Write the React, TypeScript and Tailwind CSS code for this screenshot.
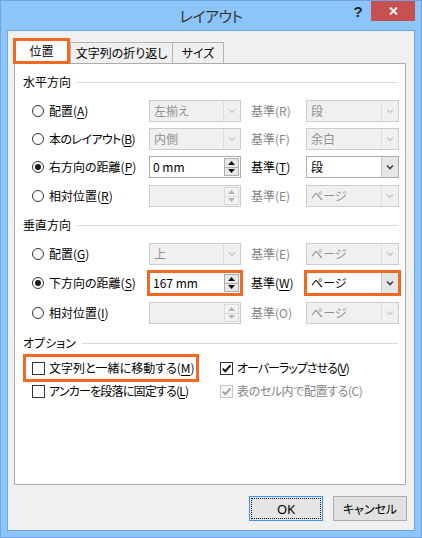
import React from "react";

const ORANGE = "#f26a21";

function U({ children }: { children: React.ReactNode }) {
  return <span className="underline underline-offset-[2px] decoration-1">{children}</span>;
}

function Radio({ checked }: { checked?: boolean }) {
  return (
    <div className="w-[12px] h-[12px] shrink-0 rounded-full border border-[#333333] bg-white flex items-center justify-center">
      {checked && <div className="w-[6px] h-[6px] rounded-full bg-[#1a1a1a]" />}
    </div>
  );
}

function Chevron({ disabled }: { disabled?: boolean }) {
  return (
    <svg width="8" height="6" viewBox="0 0 8 6">
      <polyline
        points="1,1.5 4,4.5 7,1.5"
        fill="none"
        stroke={disabled ? "#c4c4c4" : "#404040"}
        strokeWidth={disabled ? 1.2 : 1.6}
      />
    </svg>
  );
}

function Combo({ text, disabled, hl }: { text: string; disabled?: boolean; hl?: boolean }) {
  return (
    <div
      className={`w-[93px] h-[22px] flex border ${
        disabled ? "border-[#cccccc] bg-[#f0f0f0] text-[#8f8f8f]" : "border-[#abadb3] bg-white text-black"
      } ${hl ? "outline-solid outline-[3px] outline-[#f26a21] outline-offset-[-1px]" : ""}`}
    >
      <div className="flex-1 pl-[4px] flex items-center whitespace-nowrap">{text}</div>
      <div
        className={`w-[17px] flex items-center justify-center border-l ${
          disabled ? "border-[#dedede]" : "border-[#c8c8c8] bg-[#e6e6e6]"
        }`}
      >
        <Chevron disabled={disabled} />
      </div>
    </div>
  );
}

function ComboL({ text }: { text: string }) {
  return (
    <div className="w-[92px] h-[22px] flex border border-[#cccccc] bg-[#f0f0f0] text-[#8f8f8f]">
      <div className="flex-1 pl-[4px] flex items-center whitespace-nowrap">{text}</div>
      <div className="w-[17px] flex items-center justify-center border-l border-[#dedede]">
        <Chevron disabled />
      </div>
    </div>
  );
}

function Tri({ up, disabled }: { up?: boolean; disabled?: boolean }) {
  return (
    <svg width="7" height="4" viewBox="0 0 7 4">
      <polygon points={up ? "0,4 3.5,0 7,4" : "0,0 3.5,4 7,0"} fill={disabled ? "#b4b4b4" : "#111111"} />
    </svg>
  );
}

function Spin({ text, disabled, hl }: { text?: string; disabled?: boolean; hl?: boolean }) {
  return (
    <div
      className={`w-[92px] h-[22px] flex border ${
        disabled ? "border-[#cccccc] bg-[#f0f0f0]" : "border-[#abadb3] bg-white"
      } ${hl ? "outline-solid outline-[3px] outline-[#f26a21] outline-offset-[-1px]" : ""}`}
    >
      <div className="flex-1 pl-[3px] flex items-center whitespace-nowrap text-black">{text}</div>
      <div className="w-[16px] flex flex-col py-[1px] pr-[1px]">
        <div
          className={`flex-1 flex items-center justify-center border ${
            disabled ? "border-[#dadada] bg-[#f3f3f3]" : "border-[#adadad] bg-[#e8e8e8]"
          }`}
        >
          <Tri up disabled={disabled} />
        </div>
        <div
          className={`flex-1 -mt-px flex items-center justify-center border ${
            disabled ? "border-[#dadada] bg-[#f3f3f3]" : "border-[#adadad] bg-[#e8e8e8]"
          }`}
        >
          <Tri disabled={disabled} />
        </div>
      </div>
    </div>
  );
}

function Check({ checked, disabled }: { checked?: boolean; disabled?: boolean }) {
  return (
    <div
      className={`w-[13px] h-[13px] shrink-0 border flex items-center justify-center ${
        disabled ? "border-[#c4c4c4] bg-[#f7f7f7]" : "border-[#333333] bg-white"
      }`}
    >
      {checked && (
        <svg width="11" height="11" viewBox="0 0 11 11">
          <polyline
            points="1.8,5.6 4.3,8.2 9.4,2.4"
            fill="none"
            stroke={disabled ? "#a2a2a2" : "#111111"}
            strokeWidth="2"
          />
        </svg>
      )}
    </div>
  );
}

function Header({ children, className = "" }: { children: React.ReactNode; className?: string }) {
  return (
    <div className={`flex items-center h-[16px] pl-[8px] pr-[7px] ${className}`}>
      <span className="whitespace-nowrap">{children}</span>
      <div className="flex-1 h-px bg-[#dcdcdc] ml-[6px]" />
    </div>
  );
}

function Row({
  className = "",
  labelClass = "",
  checked,
  label,
  field,
  base,
  baseDisabled,
  combo,
}: {
  className?: string;
  labelClass?: string;
  checked?: boolean;
  label: React.ReactNode;
  field: React.ReactNode;
  base: React.ReactNode;
  baseDisabled?: boolean;
  combo: React.ReactNode;
}) {
  return (
    <div className={`flex items-center h-[22px] pl-[17px] ${className}`}>
      <div className="w-[117px] flex items-center gap-[5px]">
        <Radio checked={checked} />
        <span className={`whitespace-nowrap ${labelClass}`}>{label}</span>
      </div>
      {field}
      <span className={`ml-[10px] w-[55px] whitespace-nowrap ${baseDisabled ? "text-[#858585]" : "text-black"}`}>
        {base}
      </span>
      {combo}
    </div>
  );
}

export default function App() {
  return (
    <div className="w-[422px] h-[538px] bg-[#8bc5f9] border border-[#6fa5dc] flex flex-col font-['Noto_Sans_CJK_JP','Noto_Sans',sans-serif] [font-feature-settings:'palt'] text-[12px] leading-[16px] text-black overflow-hidden">
      {/* Title bar */}
      <div className="h-[29px] grid grid-cols-[1fr_auto_1fr]">
        <div />
        <div className="flex items-center text-[15px] text-[#333333] pt-[1px] tracking-[-0.5px]">レイアウト</div>
        <div className="flex justify-end items-start pr-[6px]">
          <div className="w-[26px] h-[20px] flex items-center justify-center text-[15px] font-bold text-[#222222] font-['Liberation_Sans',sans-serif] pt-[1px]">
            ?
          </div>
          <div className="w-[44px] h-[20px] bg-[#c75050] flex items-center justify-center">
            <svg width="9" height="8" viewBox="0 0 9 8">
              <line x1="1" y1="0.5" x2="8" y2="7.5" stroke="white" strokeWidth="1.8" />
              <line x1="8" y1="0.5" x2="1" y2="7.5" stroke="white" strokeWidth="1.8" />
            </svg>
          </div>
        </div>
      </div>

      {/* Client area */}
      <div className="ml-[6px] w-[408px] h-[501px] border border-[#72a6da] bg-[#f0f0f0] flex flex-col">
        {/* Tabs */}
        <div className="mt-[7px] ml-[5px] h-[25px] flex items-end relative z-10">
          <div
            className="w-[57px] h-[26px] -mb-px border-[3px] bg-white flex items-center justify-center"
            style={{ borderColor: ORANGE }}
          >
            位置
          </div>
          <div className="w-[103px] h-[21px] border border-b-0 border-[#b4b4b4] bg-[#f0f0f0] flex items-center justify-center whitespace-nowrap">
            文字列の折り返し
          </div>
          <div className="w-[52px] h-[21px] -ml-px border border-b-0 border-[#b4b4b4] bg-[#f0f0f0] flex items-center justify-center whitespace-nowrap">
            サイズ
          </div>
        </div>

        {/* Panel */}
        <div className="ml-[6px] w-[392px] h-[422px] border border-[#acacac] bg-white flex flex-col">
          <Header className="mt-[10px]">水平方向</Header>
          <Row
            className="mt-[10px]"
            label={<>配置(<U>A</U>)</>}
            field={<ComboL text="左揃え" />}
            base="基準(R)"
            baseDisabled
            combo={<Combo text="段" disabled />}
          />
          <Row
            className="mt-[6px]"
            labelClass="tracking-[-0.6px]"
            label={<>本のレイアウト(<U>B</U>)</>}
            field={<ComboL text="内側" />}
            base="基準(F)"
            baseDisabled
            combo={<Combo text="余白" disabled />}
          />
          <Row
            className="mt-[6px]"
            checked
            label={<>右方向の距離(<U>P</U>)</>}
            field={<Spin text="0 mm" />}
            base={<>基準(<U>T</U>)</>}
            combo={<Combo text="段" />}
          />
          <Row
            className="mt-[7px]"
            label={<>相対位置(<U>R</U>)</>}
            field={<Spin disabled />}
            base="基準(E)"
            baseDisabled
            combo={<Combo text="ページ" disabled />}
          />

          <Header className="mt-[10px]">垂直方向</Header>
          <Row
            className="mt-[10px]"
            label={<>配置(<U>G</U>)</>}
            field={<ComboL text="上" />}
            base="基準(E)"
            baseDisabled
            combo={<Combo text="ページ" disabled />}
          />
          <Row
            className="mt-[7px]"
            checked
            label={<>下方向の距離(<U>S</U>)</>}
            field={<Spin text="167 mm" hl />}
            base={<>基準(<U>W</U>)</>}
            combo={<Combo text="ページ" hl />}
          />
          <Row
            className="mt-[8px]"
            label={<>相対位置(<U>I</U>)</>}
            field={<Spin disabled />}
            base="基準(O)"
            baseDisabled
            combo={<Combo text="ページ" disabled />}
          />

          <Header className="mt-[11px]">オプション</Header>
          <div className="mt-[9px] flex items-center h-[16px] pl-[17px]">
            <div className="w-[188px] relative flex items-center gap-[4px]">
              <Check />
              <span className="whitespace-nowrap">
                文字列と一緒に移動する(<U>M</U>)
              </span>
              <div
                className="absolute left-[-9px] top-[-6px] w-[176px] h-[28px] border-[3px]"
                style={{ borderColor: ORANGE }}
              />
            </div>
            <div className="flex items-center gap-[4px]">
              <Check checked />
              <span className="whitespace-nowrap tracking-[-1px]">
                オーバーラップさせる(<U>V</U>)
              </span>
            </div>
          </div>
          <div className="mt-[7px] flex items-center h-[16px] pl-[17px]">
            <div className="w-[188px] flex items-center gap-[4px]">
              <Check />
              <span className="whitespace-nowrap tracking-[-0.8px]">
                アンカーを段落に固定する(<U>L</U>)
              </span>
            </div>
            <div className="flex items-center gap-[4px]">
              <Check checked disabled />
              <span className="whitespace-nowrap text-[#858585] tracking-[-0.4px]">表のセル内で配置する(C)</span>
            </div>
          </div>
        </div>

        {/* Buttons */}
        <div className="mt-[11px] h-[25px] flex justify-end gap-[10px] pr-[7px]">
          <div className="w-[74px] h-[25px] border border-[#3399ff] bg-[#e5e5e5] p-[1px]">
            <div className="w-full h-full border border-dotted border-[#111111] flex items-center justify-center font-['Noto_Sans',sans-serif] text-[13px]">
              OK
            </div>
          </div>
          <div className="w-[74px] h-[25px] border border-[#adadad] bg-[#e1e1e1] flex items-center justify-center">
            キャンセル
          </div>
        </div>
      </div>
    </div>
  );
}
